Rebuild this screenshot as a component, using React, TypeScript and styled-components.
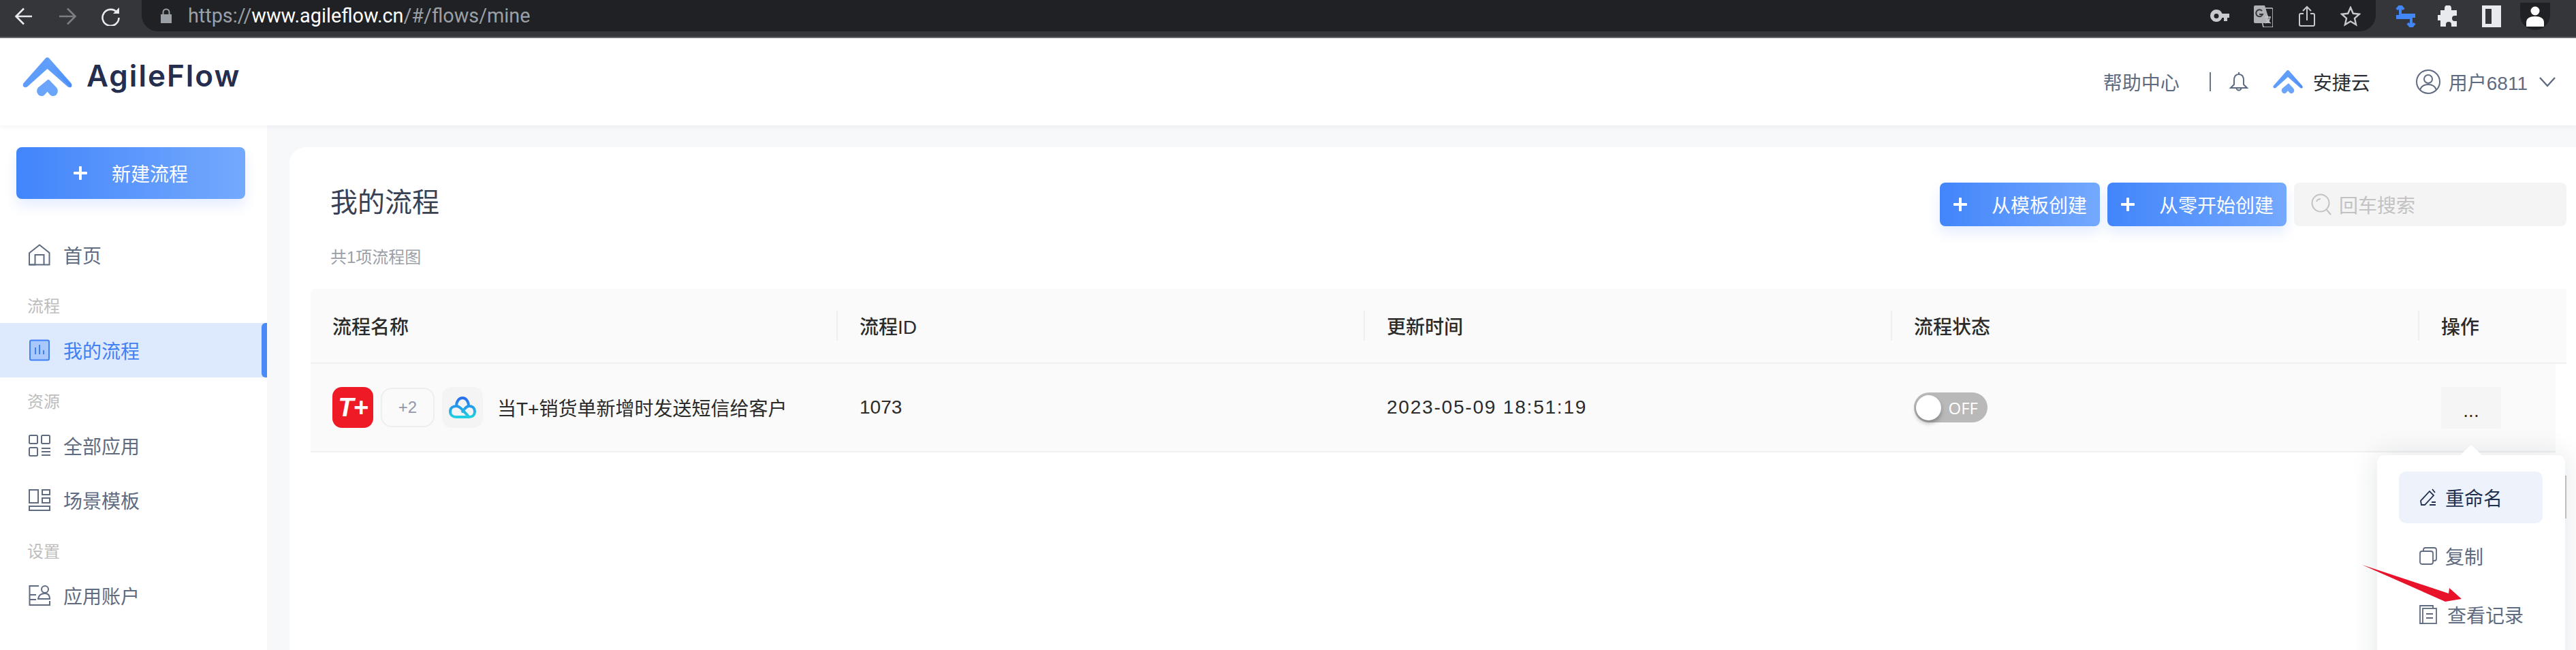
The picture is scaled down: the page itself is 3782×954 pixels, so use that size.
import React from "react";
import styled, { createGlobalStyle } from "styled-components";

const GlobalStyle = createGlobalStyle`
  html, body {
    margin: 0;
    padding: 0;
    background: #fff;
  }
  * {
    box-sizing: border-box;
  }
`;

const FONT = `"Liberation Sans", "Noto Sans CJK SC", sans-serif`;
const COLUMNS = "772px 774px 774px 774px 1fr";

const Page = styled.div`
  position: relative;
  width: 3782px;
  height: 954px;
  overflow: hidden;
  font-family: ${FONT};
  color: #2b2f36;
`;

/* browser chrome */
const BrowserBar = styled.div`
  display: flex;
  height: 56px;
  padding-left: 3px;
  background: #35363a;
  border-bottom: 2px solid #68696c;
`;

const ChromeBtn = styled.div<{ $w?: number }>`
  display: flex;
  align-items: center;
  justify-content: center;
  flex: none;
  width: ${(p) => p.$w ?? 64}px;
  height: 46px;
  padding-top: 2px;
`;

const UrlBar = styled.div`
  display: flex;
  align-items: center;
  width: 3280px;
  height: 46px;
  margin-left: 13px;
  padding: 0 5px 0 28px;
  background: #202124;
  border-radius: 0 0 24px 24px;
`;

const UrlText = styled.div`
  flex: 1;
  margin-left: 24px;
  font-family: "Roboto", sans-serif;
  font-size: 28.8px;
  color: #9aa0a6;
  white-space: nowrap;

  b {
    font-weight: 400;
    color: #fff;
  }
`;

const ExtGroup = styled.div`
  display: flex;
  margin-left: 13px;
`;

const AvatarDot = styled.div`
  display: flex;
  align-items: flex-start;
  justify-content: center;
  width: 44px;
  height: 40px;
  padding-top: 5px;
  background: #202124;
  border-radius: 0 0 22px 22px;
`;

/* app nav */
const TopNav = styled.header`
  position: relative;
  z-index: 2;
  display: flex;
  align-items: center;
  justify-content: space-between;
  height: 128px;
  padding: 0 30px 0 33px;
  background: #fff;
  box-shadow: 0 2px 8px rgba(30, 40, 70, 0.06);
`;

const Brand = styled.div`
  display: flex;
  align-items: center;
  gap: 21px;
  margin-top: -16px;
`;

const BrandName = styled.span`
  margin-top: -2px;
  font-family: "Inter", sans-serif;
  font-size: 44px;
  font-weight: 600;
  line-height: 48px;
  letter-spacing: 2px;
  color: #252e4e;
`;

const NavRight = styled.div`
  display: flex;
  align-items: center;
  height: 44px;
  font-size: 28px;
  color: #5f6b80;
`;

const NavDivider = styled.span`
  width: 2px;
  height: 28px;
  margin: 0 27px 0 44px;
  background: #6b7488;
`;

const LogoSlot = styled.span`
  display: flex;
  margin-left: 36px;
`;

const Company = styled.span`
  margin: 0 67px 0 15px;
  color: #2b2f36;
`;

const UserName = styled.span`
  margin: 0 17px 0 12px;
`;

/* body */
const Body = styled.div`
  display: flex;
  height: 770px;
  background: #f7f8fa;
`;

const Sidebar = styled.aside`
  flex: none;
  width: 392px;
  padding-top: 32px;
  background: #fff;
`;

const PrimaryBtn = styled.button<{ $w: number; $h?: number; $gap?: number }>`
  display: flex;
  align-items: center;
  justify-content: ${(p) => (p.$gap ? "center" : "flex-start")};
  gap: ${(p) => p.$gap ?? 36}px;
  flex: none;
  width: ${(p) => p.$w}px;
  height: ${(p) => p.$h ?? 64}px;
  padding: 0 0 0 ${(p) => (p.$gap ? 0 : 20)}px;
  border: 0;
  border-radius: 8px;
  background: linear-gradient(90deg, #4285fb 0%, #74a9fd 100%);
  box-shadow: 0 10px 18px rgba(70, 130, 250, 0.14);
  font-family: ${FONT};
  font-size: 28px;
  color: #fff;
  white-space: nowrap;
`;

const NewFlowBtn = styled(PrimaryBtn)`
  margin-left: 24px;
`;

const Menu = styled.nav`
  margin-top: 42px;
`;

const SideItem = styled.div<{ $active?: boolean }>`
  position: relative;
  display: flex;
  align-items: center;
  gap: 19px;
  height: 80px;
  padding-left: 42px;
  font-size: 28px;
  color: ${(p) => (p.$active ? "#3f80f5" : "#5f6b80")};
  background: ${(p) => (p.$active ? "#dde9fd" : "transparent")};

  &::after {
    content: "";
    display: ${(p) => (p.$active ? "block" : "none")};
    position: absolute;
    top: 0;
    right: 0;
    bottom: 0;
    width: 8px;
    border-radius: 6px 0 0 6px;
    background: #4a8af8;
  }
`;

const SideLabel = styled.div`
  height: 60px;
  padding: 18px 0 0 40px;
  font-size: 24px;
  line-height: 36px;
  color: #bdbdbd;
`;

const Main = styled.main`
  flex: 1;
  min-width: 0;
  margin: 32px 0 0 33px;
  background: #fff;
  border-radius: 24px 0 0 0;
`;

const CardHead = styled.div`
  display: flex;
  justify-content: space-between;
  height: 208px;
  padding: 52px 14px 0 60px;
`;

const Title = styled.h1`
  margin: 0;
  font-size: 40px;
  font-weight: 400;
  line-height: 58px;
  color: #3a4152;
`;

const SubTitle = styled.div`
  margin-top: 35px;
  font-size: 24px;
  line-height: 34px;
  color: #9a9fa8;
`;

const Actions = styled.div`
  display: flex;
  gap: 11px;
`;

const Search = styled.div`
  display: flex;
  align-items: center;
  gap: 11px;
  width: 400px;
  height: 64px;
  padding-left: 25px;
  border-radius: 8px;
  background: #f4f4f4;
  font-size: 28px;
  color: #c2c2c2;
`;

/* table */
const Table = styled.div`
  margin: 0 14px 0 31px;
`;

const HeadRow = styled.div`
  display: grid;
  grid-template-columns: ${COLUMNS};
  height: 110px;
  background: #fafafa;
  border-bottom: 2px solid #f0f0f0;
  border-radius: 8px 0 0 0;
`;

const HeadCell = styled.div<{ $first?: boolean }>`
  position: relative;
  display: flex;
  align-items: center;
  padding: 0 0 0 ${(p) => (p.$first ? 32 : 34)}px;
  font-size: 28px;
  font-weight: 500;
  color: #2b2b2b;

  &::before {
    content: "";
    display: ${(p) => (p.$first ? "none" : "block")};
    position: absolute;
    left: 0;
    top: 32px;
    height: 44px;
    width: 2px;
    background: #efefef;
  }
`;

const DataRow = styled.div`
  display: grid;
  grid-template-columns: ${COLUMNS};
  height: 130px;
  margin-right: 16px;
  background: #fafafa;
  border-bottom: 2px solid #f0f0f0;
`;

const DataCell = styled.div<{ $first?: boolean; $spaced?: boolean }>`
  display: flex;
  align-items: center;
  padding-left: ${(p) => (p.$first ? 32 : 34)}px;
  font-size: 28px;
  letter-spacing: ${(p) => (p.$spaced ? "1.8px" : "0")};
  color: #2b2b2b;
  white-space: nowrap;
`;

const AppIcon = styled.div<{ $bg: string }>`
  display: flex;
  align-items: center;
  justify-content: center;
  flex: none;
  width: 60px;
  height: 60px;
  border-radius: 14px;
  background: ${(p) => p.$bg};
`;

const TPlus = styled.span`
  font-family: "Liberation Sans", sans-serif;
  font-size: 38px;
  font-style: italic;
  font-weight: 700;
  letter-spacing: -1px;
  color: #fff;
`;

const MoreApps = styled.div`
  display: flex;
  align-items: center;
  justify-content: center;
  flex: none;
  width: 79px;
  height: 58px;
  margin: 0 11px;
  border: 2px solid #eeeeee;
  border-radius: 16px;
  font-size: 24px;
  color: #9298a8;
`;

const FlowName = styled.span`
  margin-left: 21px;
`;

const Toggle = styled.div`
  display: flex;
  align-items: center;
  width: 108px;
  height: 44px;
  padding: 0 14px 0 3px;
  border-radius: 22px;
  background: #b9b9b9;
  justify-content: space-between;
  font-family: "Open Sans", sans-serif;
  font-size: 24px;
  color: #fff;
`;

const Knob = styled.span`
  width: 37px;
  height: 37px;
  border-radius: 50%;
  background: #fff;
  box-shadow: 0 4px 6px rgba(0, 0, 0, 0.3);
`;

const OpsWrap = styled.div`
  position: relative;
`;

const MoreBtn = styled.div`
  display: flex;
  align-items: flex-end;
  justify-content: center;
  width: 88px;
  height: 61px;
  padding-bottom: 12px;
  border-radius: 4px;
  background: #f5f5f5;
  font-size: 28px;
  line-height: 28px;
  color: #2b2b2b;
`;

const Dropdown = styled.div`
  position: absolute;
  z-index: 3;
  top: 100px;
  left: -94px;
  width: 276px;
  height: 400px;
  padding: 24px 33px 0 32px;
  background: #fff;
  border-radius: 10px;
  box-shadow: 0 0 40px rgba(20, 30, 60, 0.12);

  &::before {
    content: "";
    position: absolute;
    top: -11px;
    left: 127px;
    width: 22px;
    height: 22px;
    background: #fff;
    transform: rotate(45deg);
    border-radius: 4px 0 0 0;
  }

  &::after {
    content: "";
    position: absolute;
    top: 30px;
    right: -2px;
    width: 2px;
    height: 63px;
    background: #bdbdbd;
  }
`;

const DropItem = styled.div<{ $active?: boolean; $gap?: number }>`
  display: flex;
  align-items: center;
  gap: ${(p) => p.$gap ?? 12}px;
  height: 76px;
  margin-bottom: 10px;
  padding-left: 30px;
  border-radius: 10px;
  background: ${(p) => (p.$active ? "#eef3fb" : "transparent")};
  font-size: 28px;
  color: ${(p) => (p.$active ? "#1f3050" : "#5f6b80")};
`;

const ArrowMark = styled.svg`
  position: absolute;
  z-index: 5;
  left: 3460px;
  top: 820px;
`;

const Chevrons = ({ w, h }: { w: number; h: number }) => (
  <svg width={w} height={h} viewBox="0 0 73 57" fill="none">
    <defs>
      <linearGradient id={`lg${w}`} x1="0" y1="0" x2="1" y2="1">
        <stop offset="0" stopColor="#6ca6fb" />
        <stop offset="1" stopColor="#3f83f5" />
      </linearGradient>
    </defs>
    <path
      d="M33 2.500c2-3 5-3 7 0l31 35c2.500 3 1.500 6-.5 6.500-2 .5-3.500 0-5-1.500L36.500 17 8 42.500c-1.500 1.500-3 2-5 1.500-2-.5-3.500-3.500-1-6.500z"
      fill="#5f9dfa"
    />
    <path d="M36.500 0l34.500 39c2 3 1 5-.5 5.500L40 14z" fill={`url(#lg${w})`} opacity="0.75" />
    <path
      d="M36.500 33.500c1-1 2-1 3 0l10.500 11c2 2.500 2.500 5.500 1 8.500-1.500 3-4 4-6.500 4-2 0-3.500-1-5-3l-3-3.500-3 3.500c-1.500 2-3 3-5 3-2.500 0-5-1-6.500-4-1.500-3-1-6 1-8.500z"
      fill="#6aa5fb"
    />
  </svg>
);

const iconProps = { fill: "none", stroke: "currentColor", strokeWidth: 2 };

const HomeIcon = () => (
  <svg width="32" height="32" viewBox="0 0 32 32" {...iconProps}>
    <path d="M1.500 13L16 1.500 30.500 13v17.500h-30" />
    <path d="M1 12.500v18h8.500V16h13v14.500" />
  </svg>
);

const FlowIcon = () => (
  <svg width="32" height="32" viewBox="0 0 32 32" stroke="#3f80f5" strokeWidth="2" fill="#a9c8fb">
    <rect x="2" y="1.500" width="28" height="29" rx="2" />
    <path d="M10 12v10M16 8v14M22 16v6" fill="none" />
  </svg>
);

const AppsIcon = () => (
  <svg width="32" height="32" viewBox="0 0 32 32" {...iconProps}>
    <rect x="1" y="1" width="12" height="12" rx="1.500" />
    <rect x="19" y="1" width="12" height="12" rx="1.500" />
    <rect x="1" y="19" width="12" height="12" rx="1.500" />
    <path d="M19 20h13M19 25h13M19 30h13" />
  </svg>
);

const TemplateIcon = () => (
  <svg width="32" height="32" viewBox="0 0 32 32" {...iconProps}>
    <rect x="1" y="1" width="13" height="19" />
    <rect x="20" y="1" width="11" height="7" />
    <rect x="20" y="13" width="11" height="7" />
    <rect x="1" y="25" width="30" height="6" />
  </svg>
);

const AccountIcon = () => (
  <svg width="32" height="32" viewBox="0 0 32 32" {...iconProps}>
    <path d="M15 2H1.500v28H31v-6" />
    <path d="M2 15h9M2 22h9" />
    <circle cx="24" cy="7" r="5" />
    <path d="M14 21c1-6 5-8 10-8s7 3 7 8z" />
  </svg>
);

const Plus = ({ size = 20 }: { size?: number }) => (
  <svg width={size} height={size} viewBox="0 0 20 20" fill="#fff">
    <rect x="8" y="0" width="4" height="20" rx="1" />
    <rect x="0" y="8" width="20" height="4" rx="1" />
  </svg>
);

const CloudIcon = () => (
  <svg width="40" height="32" viewBox="0 0 40 32" fill="none" strokeWidth="4" strokeLinecap="round">
    <defs>
      <linearGradient id="cloudGrad" x1="0" y1="0" x2="0" y2="1">
        <stop offset="0" stopColor="#2a6ff0" />
        <stop offset="1" stopColor="#20d0e0" />
      </linearGradient>
    </defs>
    <path
      d="M11 14c0-7 4-12 9-12s9 5 9 12M28 30H11c-5 0-9-3-9-8s4-8 9-8c4 0 7 3 11 8l4 4c2 2 3 4 4 4 5 0 8-3 8-8s-3-8-8-8c-4 0-6 3-10 8"
      stroke="url(#cloudGrad)"
    />
  </svg>
);

const App: React.FC = () => (
  <Page>
    <GlobalStyle />
    <BrowserBar>
      <ChromeBtn>
        <svg width="28" height="28" viewBox="0 0 28 28" fill="none" stroke="#e8eaed" strokeWidth="2.600">
          <path d="M26 14H3M14 2.500L2.500 14 14 25.500" />
        </svg>
      </ChromeBtn>
      <ChromeBtn>
        <svg width="28" height="28" viewBox="0 0 28 28" fill="none" stroke="#7c7e82" strokeWidth="2.600">
          <path d="M2 14h23M14 2.500L25.500 14 14 25.500" />
        </svg>
      </ChromeBtn>
      <ChromeBtn>
        <svg width="28" height="28" viewBox="0 0 28 28" fill="none" stroke="#e8eaed" strokeWidth="2.600">
          <path d="M23 8.500A12 12 0 1 0 25.500 16" />
          <path d="M26 1v9h-9" fill="#e8eaed" stroke="none" />
        </svg>
      </ChromeBtn>
      <UrlBar>
        <svg width="16" height="22" viewBox="0 0 16 22" fill="#9aa0a6">
          <path d="M0 9h16v13H0z" />
          <path d="M3.500 10V6a4.500 4.500 0 0 1 9 0v4" fill="none" stroke="#9aa0a6" strokeWidth="2" />
        </svg>
        <UrlText>
          https://<b>www.agileflow.cn</b>/#/flows/mine
        </UrlText>
        <ChromeBtn>
          <svg width="28" height="20" viewBox="0 0 28 20" fill="#c8c9cc">
            <path d="M9 0a9 9 0 0 1 8.500 6H28v6h-3v5h-5v-5h-2.500A9 9 0 1 1 9 0zm0 6a3.500 3.500 0 1 0 0 7 3.500 3.500 0 0 0 0-7z" fillRule="evenodd" />
          </svg>
        </ChromeBtn>
        <ChromeBtn>
          <svg width="28" height="32" viewBox="0 0 28 32">
            <path d="M8 4h18a2 2 0 0 1 2 2v24a2 2 0 0 1-2 2H14z" fill="#202124" stroke="#c8c9cc" strokeWidth="1.500" />
            <path d="M2 0h14l8 26H2a2 2 0 0 1-2-2V2a2 2 0 0 1 2-2z" fill="#b0b1b4" />
            <path d="M12 8a5 5 0 1 0 1 5H8" fill="none" stroke="#35363a" strokeWidth="2" />
            <path d="M16 17h9M20 15v2M24 17c-1 5-4 8-7 9M18 20c1 3 4 5 7 6" fill="none" stroke="#c8c9cc" strokeWidth="1.300" />
          </svg>
        </ChromeBtn>
        <ChromeBtn>
          <svg width="24" height="32" viewBox="0 0 24 32" fill="none" stroke="#c8c9cc" strokeWidth="2">
            <path d="M7 12H3a2 2 0 0 0-2 2v14a2 2 0 0 0 2 2h18a2 2 0 0 0 2-2V14a2 2 0 0 0-2-2h-4" />
            <path d="M12 22V2M6 8l6-6 6 6" />
          </svg>
        </ChromeBtn>
        <ChromeBtn>
          <svg width="30" height="30" viewBox="0 0 30 30" fill="none" stroke="#c8c9cc" strokeWidth="2.400">
            <path d="M15 2l3.800 8.800 9.200.9-7 6.200 2.100 9.300-8.100-4.900-8.100 4.900 2.100-9.300-7-6.200 9.200-.9z" />
          </svg>
        </ChromeBtn>
      </UrlBar>
      <ExtGroup>
        <ChromeBtn $w={62}>
          <svg width="30" height="32" viewBox="0 0 30 32" fill="none" stroke="#4285f4" strokeWidth="4">
            <path d="M7 0v10M7 8v6h20v4M2 6l5-6 5 6" />
            <path d="M23 32V22M23 24v-6H3v-4M28 26l-5 6-5-6" />
          </svg>
        </ChromeBtn>
        <ChromeBtn $w={62}>
          <svg width="30" height="32" viewBox="0 0 30 32" fill="#e8eaed">
            <path d="M10 4a5 5 0 0 1 10 0v3h8v8h-3a4 4 0 0 0 0 8h3v8h-8v-3a3 3 0 0 0-8 0v3H4V22H1a4 4 0 0 1 0-8h3V7h6z" />
          </svg>
        </ChromeBtn>
        <ChromeBtn $w={66}>
          <svg width="28" height="32" viewBox="0 0 28 32">
            <path d="M0 0h28v32H0z" fill="#e8eaed" />
            <path d="M5 5h9v22H5z" fill="#35363a" />
          </svg>
        </ChromeBtn>
        <ChromeBtn $w={62}>
          <AvatarDot>
            <svg width="26" height="30" viewBox="0 0 26 30" fill="#fff">
              <circle cx="13" cy="7" r="6.500" />
              <path d="M0 30v-6c0-6 5-9 13-9s13 3 13 9v6z" />
            </svg>
          </AvatarDot>
        </ChromeBtn>
      </ExtGroup>
    </BrowserBar>

    <TopNav>
      <Brand>
        <Chevrons w={73} h={57} />
        <BrandName>AgileFlow</BrandName>
      </Brand>
      <NavRight>
        <span>帮助中心</span>
        <NavDivider />
        <svg width="28" height="30" viewBox="0 0 28 30" fill="none" stroke="currentColor" strokeWidth="2">
          <path d="M14 1v3M14 4c-5 0-7 4-7 9v6l-5 5h24l-5-5v-6c0-5-2-9-7-9z" />
          <path d="M10.500 24a3.500 3.500 0 0 0 7 0" />
        </svg>
        <LogoSlot>
          <Chevrons w={44} h={36} />
        </LogoSlot>
        <Company>安捷云</Company>
        <svg width="36" height="36" viewBox="0 0 36 36" fill="none" stroke="currentColor" strokeWidth="2">
          <circle cx="18" cy="18" r="17" />
          <circle cx="18" cy="14" r="6" />
          <path d="M6 30c2-6 7-8 12-8s10 2 12 8" />
        </svg>
        <UserName>用户6811</UserName>
        <svg width="24" height="16" viewBox="0 0 24 16" fill="none" stroke="currentColor" strokeWidth="2.400">
          <path d="M1 2l11 12L23 2" />
        </svg>
      </NavRight>
    </TopNav>

    <Body>
      <Sidebar>
        <NewFlowBtn $w={336} $h={76} $gap={36}>
          <Plus />
          <span>新建流程</span>
        </NewFlowBtn>
        <Menu>
          <SideItem>
            <HomeIcon />
            首页
          </SideItem>
          <SideLabel>流程</SideLabel>
          <SideItem $active>
            <FlowIcon />
            我的流程
          </SideItem>
          <SideLabel>资源</SideLabel>
          <SideItem>
            <AppsIcon />
            全部应用
          </SideItem>
          <SideItem>
            <TemplateIcon />
            场景模板
          </SideItem>
          <SideLabel>设置</SideLabel>
          <SideItem>
            <AccountIcon />
            应用账户
          </SideItem>
        </Menu>
      </Sidebar>

      <Main>
        <CardHead>
          <div>
            <Title>我的流程</Title>
            <SubTitle>共1项流程图</SubTitle>
          </div>
          <Actions>
            <PrimaryBtn $w={235}>
              <Plus />
              <span>从模板创建</span>
            </PrimaryBtn>
            <PrimaryBtn $w={263}>
              <Plus />
              <span>从零开始创建</span>
            </PrimaryBtn>
            <Search>
              <svg width="30" height="32" viewBox="0 0 30 32" fill="none" stroke="#c2c2c2" strokeWidth="2">
                <circle cx="14" cy="14" r="12.500" />
                <path d="M23 24l6 7M8 12c1-3 3-4 6-4" />
              </svg>
              回车搜索
            </Search>
          </Actions>
        </CardHead>

        <Table>
          <HeadRow>
            <HeadCell $first>流程名称</HeadCell>
            <HeadCell>流程ID</HeadCell>
            <HeadCell>更新时间</HeadCell>
            <HeadCell>流程状态</HeadCell>
            <HeadCell>操作</HeadCell>
          </HeadRow>
          <DataRow>
            <DataCell $first>
              <AppIcon $bg="#ee1a26">
                <TPlus>T+</TPlus>
              </AppIcon>
              <MoreApps>+2</MoreApps>
              <AppIcon $bg="#f4f4f4">
                <CloudIcon />
              </AppIcon>
              <FlowName>当T+销货单新增时发送短信给客户</FlowName>
            </DataCell>
            <DataCell>1073</DataCell>
            <DataCell $spaced>2023-05-09 18:51:19</DataCell>
            <DataCell>
              <Toggle>
                <Knob />
                OFF
              </Toggle>
            </DataCell>
            <DataCell>
              <OpsWrap>
                <MoreBtn>...</MoreBtn>
                <Dropdown>
                  <DropItem $active>
                    <svg width="26" height="26" viewBox="0 0 26 26" fill="none" stroke="#1f3050" strokeWidth="1.800">
                      <path d="M3 24l-1-6L15 4l6 6L8 24zM19 1l4 5M15 24h9M18 20h6" />
                    </svg>
                    重命名
                  </DropItem>
                  <DropItem>
                    <svg width="26" height="26" viewBox="0 0 26 26" fill="none" stroke="#5f6b80" strokeWidth="1.800">
                      <rect x="1" y="6" width="19" height="19" rx="3" />
                      <path d="M6 6V4a3 3 0 0 1 3-3h13a3 3 0 0 1 3 3v13a3 3 0 0 1-3 3h-2" />
                    </svg>
                    复制
                  </DropItem>
                  <DropItem $gap={15}>
                    <svg width="26" height="28" viewBox="0 0 26 28" fill="none" stroke="#5f6b80" strokeWidth="1.800">
                      <path d="M5 27H1V1h19v4" />
                      <rect x="5" y="5" width="20" height="22" />
                      <path d="M10 13h10M10 19h10" />
                    </svg>
                    查看记录
                  </DropItem>
                </Dropdown>
              </OpsWrap>
            </DataCell>
          </DataRow>
        </Table>
      </Main>
    </Body>

    <ArrowMark width="160" height="70" viewBox="3460 820 160 70">
      <polygon points="3468,829 3595,871 3596,863 3614,879 3590,883" fill="#e8132a" />
    </ArrowMark>
  </Page>
);

export default App;
